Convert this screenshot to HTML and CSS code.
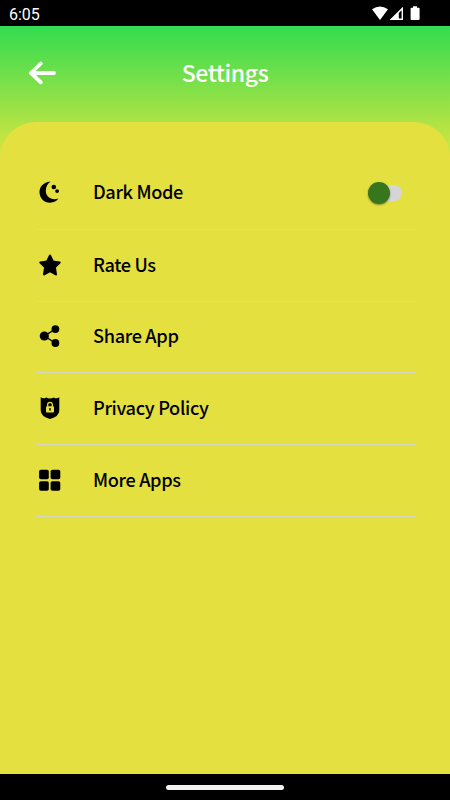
FILE: index.html
```html
<!DOCTYPE html>
<html lang="en">
<head>
<meta charset="utf-8">
<title>Settings</title>
<link rel="stylesheet" href="styles.css">
</head>
<body>
<div class="screen">
  <div class="status">
    <span class="clock">6:05</span>
    <svg class="signals" width="50" height="16" viewBox="0 0 50 16">
      <path fill="#fff" d="M0 3.3Q8-2.2 16 3.3L8 14Z"/>
      <path fill="#fff" fill-rule="evenodd" d="M31 0.8V14H17.5ZM29.6 4.2L26.8 7V12.6H29.6Z"/>
      <path fill="#fff" d="M41 0.3H45V1.8H46.6Q47.6 1.8 47.6 2.8V13Q47.6 14 46.6 14H39.6Q38.6 14 38.6 13V2.8Q38.6 1.8 39.6 1.8H41Z"/>
    </svg>
  </div>
  <header class="header">
    <svg class="back" width="28" height="24" viewBox="0 0 28 24" fill="none" stroke="#fff" stroke-width="3.8" stroke-linecap="round" stroke-linejoin="round"><path d="M12.8 2.5L3 12L12.8 21.3M3 12H26"/></svg>
    <h1 class="title">Settings</h1>
  </header>
  <main class="panel">
    <div class="row first">
      <svg class="icon" viewBox="0 0 22 22"><path d="M11.6.5C3.8 1.3.5 6.2.5 11.2C.5 17 5 21.7 11 21.7C14.8 21.7 17.8 20.1 19.4 17.6C12.5 19.8 6.8 16 6.8 9.8C6.8 5.8 8.7 2.3 11.6.5Z"/><circle cx="14.8" cy="6" r="2.3"/><circle cx="18.1" cy="10.1" r="1.9"/></svg>
      <span class="label">Dark Mode</span>
      <span class="switch"><span class="thumb"></span></span>
    </div>
    <div class="row">
      <svg class="icon" viewBox="0 0 22 22"><path stroke="#000" stroke-width="2.2" stroke-linejoin="round" d="M11 1.7L13.9 7.6L20.6 8.5L15.8 13.2L16.9 20.3L11 17.1L5.1 20.3L6.2 13.2L1.4 8.5L8.1 7.6Z"/></svg>
      <span class="label">Rate Us</span>
    </div>
    <div class="row short">
      <svg class="icon" viewBox="0 0 22 22"><path stroke="#000" stroke-width="1.4" fill="none" d="M16.4 4.1L5.3 11L16.4 18"/><circle cx="5.3" cy="11" r="4.6"/><circle cx="16.4" cy="4.1" r="3.9"/><circle cx="16.4" cy="18" r="3.9"/></svg>
      <span class="label">Share App</span>
    </div>
    <div class="row">
      <svg class="icon" viewBox="0 0 22 22"><path d="M1.7.3Q4.5 2.2 7.2.4Q11 2.6 14.8.4Q17.5 2.2 20.3.3V13.6Q20.3 19.4 11 22Q1.7 19.4 1.7 13.6Z"/><rect class="lock" x="7" y="9.3" width="8" height="6.3" rx="1"/><path class="shackle" d="M8.7 9.8V7.6A2.3 2.3 0 0 1 13.3 7.6V9.8"/><circle cx="11" cy="11.9" r=".9"/><path d="M10.6 12H11.4V14H10.6Z"/></svg>
      <span class="label">Privacy Policy</span>
    </div>
    <div class="row">
      <svg class="icon" viewBox="0 0 22 22"><rect x=".1" y=".8" width="9.7" height="9.5" rx="1.8"/><rect x="11.6" y=".8" width="9.7" height="9.5" rx="1.8"/><rect x=".1" y="12.2" width="9.7" height="9.5" rx="1.8"/><rect x="11.6" y="12.2" width="9.7" height="9.5" rx="1.8"/></svg>
      <span class="label">More Apps</span>
    </div>
  </main>
  <div class="navbar"><span class="handle"></span></div>
</div>
</body>
</html>
```
FILE: styles.css
```css
* { box-sizing: border-box; }
body { margin: 0; }
.screen {
  width: 450px;
  height: 800px;
  display: flex;
  flex-direction: column;
  overflow: hidden;
  background: linear-gradient(#32dc50 26px, #e4e640 165px);
  font-family: "Noto Sans CJK SC", "Noto Sans", sans-serif;
}
.status {
  height: 26px;
  display: flex;
  justify-content: space-between;
  align-items: center;
  padding: 0 28px 0 9px;
  background: #000;
  color: #fff;
}
.clock { font: 16px/26px Roboto, sans-serif; padding-top: 3px; }
.signals { margin-top: 1px; }
.header {
  height: 96px;
  display: grid;
  grid-template-columns: 28px 1fr 28px;
  align-items: center;
  padding: 0 28px;
}
.back { display: block; margin-top: -2px; }
.title {
  margin: -4px 0 0;
  text-align: center;
  color: #fff;
  font-size: 23px;
  line-height: 36px;
  font-weight: 500;
  letter-spacing: -.4px;
}
.panel {
  flex: 1;
  padding: 36px 34px 0 36px;
  background: #e4e040;
  border-radius: 36px 36px 0 0;
}
.row {
  height: 72px;
  display: flex;
  align-items: center;
  padding-left: 3px;
  border-bottom: 1px solid #d5d6c0;
}
.short { height: 71px; padding-bottom: 1px; }
.first { padding-bottom: 2px; }
.icon { width: 22px; height: 22px; margin-top: -1px; }
.label {
  margin: -3px 0 0 32px;
  color: #000;
  font-size: 18.2px;
  line-height: 28px;
  font-weight: 500;
  letter-spacing: -.35px;
}
.switch {
  display: flex;
  align-items: center;
  width: 33px;
  height: 16px;
  margin: 1px 14px 0 auto;
  border-radius: 8px;
  background: #d5d5d5;
}
.thumb {
  flex: none;
  width: 22px;
  height: 22px;
  margin-left: -1px;
  border-radius: 50%;
  background: #37761d;
  box-shadow: 0 1px 2px rgba(0, 0, 0, .4);
}
.lock { fill: #e4e040; }
.shackle { fill: none; stroke: #e4e040; stroke-width: 1.3; }
.navbar {
  height: 26px;
  display: flex;
  justify-content: center;
  align-items: center;
  background: #000;
}
.handle { width: 118px; height: 5px; border-radius: 3px; background: #f2f2f2; }
```
